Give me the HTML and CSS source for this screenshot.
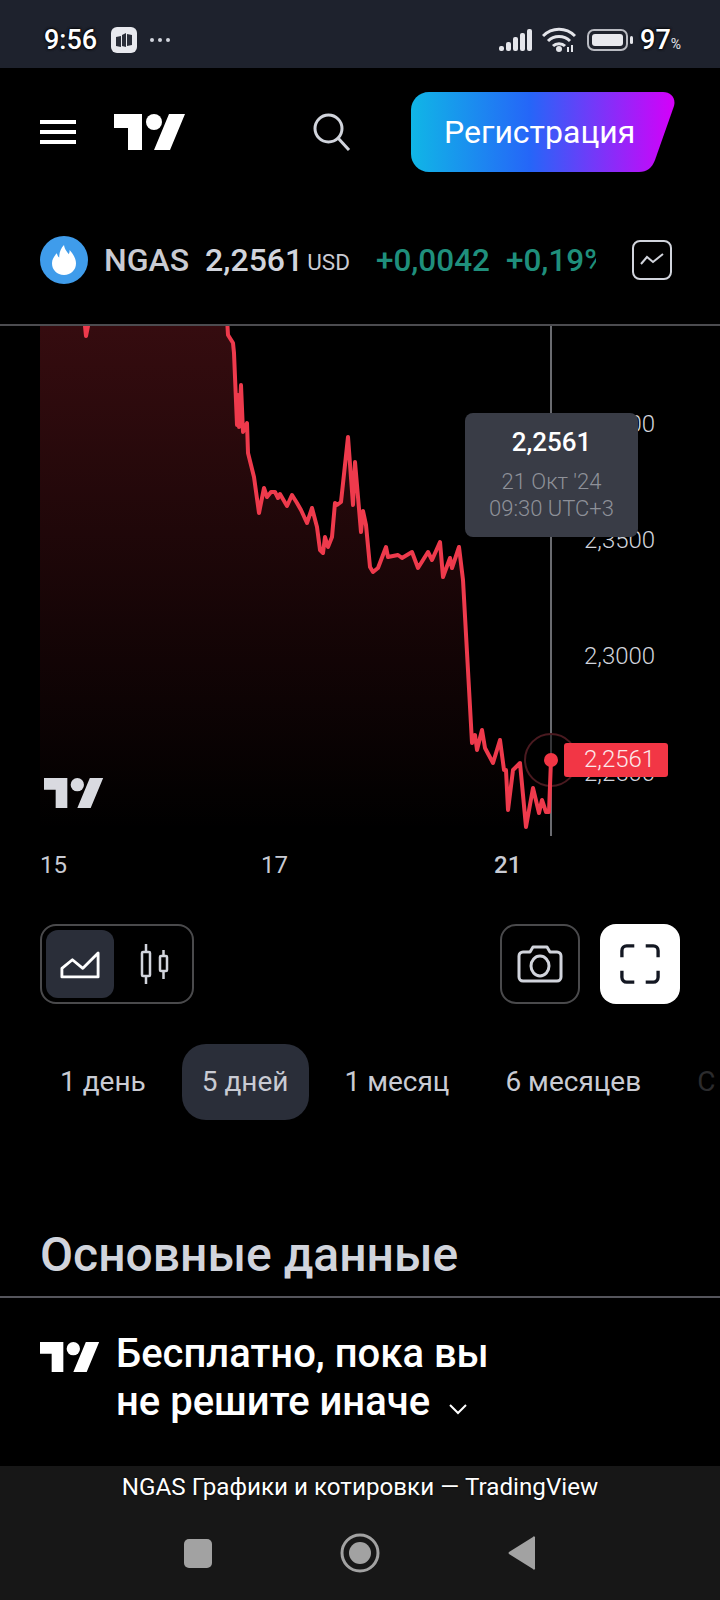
FILE: index.html
```html
<!DOCTYPE html>
<html lang="ru">
<head>
    <meta charset="UTF-8">
    <meta name="viewport" content="width=device-width, initial-scale=1.0">
    <title>NGAS Графики и котировки — TradingView</title>
    <link rel="stylesheet" href="styles.css">
</head>
<body>
    <div class="status-bar">
        <span class="clock">9:56</span>
        <span class="app-icon">
            <svg width="18" height="18" viewBox="0 0 18 18"><path d="M1 6l5-1v11l-5-1zM7 4l4-2v14l-4-1zM12 3l5 1v10l-5 1z" fill="#2a2e39"/></svg>
        </span>
        <span class="dots"><i></i><i></i><i></i></span>
        <span class="status-right">
            <svg width="34" height="24" viewBox="0 0 34 24" fill="#e4e5ea">
                <rect x="0" y="18" width="5" height="5" rx="2"/>
                <rect x="7" y="14" width="5" height="9" rx="2"/>
                <rect x="14" y="9" width="5" height="14" rx="2"/>
                <rect x="21" y="5" width="5" height="18" rx="2"/>
                <rect x="28" y="1" width="5" height="22" rx="2"/>
            </svg>
            <svg class="wifi" width="34" height="26" viewBox="0 0 34 26" fill="none" stroke="#e4e5ea" stroke-width="3">
                <path d="M1 9c9-9 23-9 32 0"/>
                <path d="M6 14c6-6 16-6 22 0"/>
                <path d="M11 19c3-3 9-3 12 0"/>
                <circle cx="17" cy="22" r="3" fill="#e4e5ea" stroke="none"/>
                <path d="M26 20v5M30 18v7" stroke-width="2"/>
            </svg>
            <svg class="battery" width="46" height="22" viewBox="0 0 46 22">
                <rect x="1" y="1" width="39" height="20" rx="6" fill="none" stroke="#b9bbc2" stroke-width="2"/>
                <rect x="5" y="5" width="31" height="12" rx="3" fill="#e8e9ee"/>
                <rect x="43" y="7" width="3" height="8" rx="1.5" fill="#e4e5ea"/>
            </svg>
            <span class="clock">97</span><span class="percent">%</span>
        </span>
    </div>

    <header class="site-header">
        <div class="nav">
            <span class="burger"><i></i><i></i><i></i></span>
            <svg class="logo" width="72" height="36" viewBox="0 4 36 18"><path d="M14 22H7V11H0V4h14v18zM28 22h-8l7.5-18h8L28 22z"/><circle cx="20" cy="8" r="4"/></svg>
            <svg class="search" width="38" height="38" viewBox="0 0 38 38" fill="none" stroke="#d1d4dc" stroke-width="3"><circle cx="15.500" cy="15.500" r="13.500"/><path d="M25 25l11 12"/></svg>
            <a class="signup">
                <svg class="signup-bg" width="264" height="80" viewBox="0 0 264 80">
                    <defs>
                        <linearGradient id="signupGrad" x1="0" y1="0.500" x2="1" y2="0.500">
                            <stop offset="0" stop-color="#10b6e6"/>
                            <stop offset="0.450" stop-color="#2566f8"/>
                            <stop offset="1" stop-color="#d500f9"/>
                        </linearGradient>
                    </defs>
                    <path d="M18 0H252C260 0 265 6 263 14L244 68C241 76 236 80 228 80H18C8 80 0 72 0 62V18C0 8 8 0 18 0Z" fill="url(#signupGrad)"/>
                </svg>
                <span class="signup-text">Регистрация</span>
            </a>
        </div>
        <div class="ticker">
            <span class="ticker-icon">
                <svg width="24" height="30" viewBox="0 0 30 36" preserveAspectRatio="none"><path d="M15 0c1 6 4 8 6 11 1-2 1-3 1-5 5 5 8 11 8 16 0 8-6 14-15 14S0 30 0 22c0-5 3-9 6-12 1 2 1 4 3 5 0-6 2-11 6-15z" fill="#fff"/></svg>
            </span>
            <span class="ticker-name">NGAS</span>
            <span class="ticker-price">2,2561</span>
            <span class="ticker-cur">USD</span>
            <span class="ticker-changes">
                <span class="ticker-change">+0,0042</span>
                <span class="ticker-change">+0,19%</span>
            </span>
            <svg class="ticker-chart" width="40" height="40" viewBox="0 0 40 40" fill="none" stroke="#d1d4dc" stroke-width="2"><rect x="1" y="1" width="38" height="38" rx="7"/><path d="M9 24l6-7 6 5 10-8"/></svg>
        </div>
    </header>

    <section class="chart">
        <svg class="plot" width="720" height="510" viewBox="0 326 720 510">
            <defs>
                <linearGradient id="areaGrad" x1="0" y1="326" x2="0" y2="830" gradientUnits="userSpaceOnUse">
                    <stop offset="0" stop-color="#f23645" stop-opacity="0.220"/>
                    <stop offset="1" stop-color="#f23645" stop-opacity="0"/>
                </linearGradient>
            </defs>
            <path id="area" fill="url(#areaGrad)" d=""/>
            <path d="M551 326V836" stroke="#6a6b70" stroke-width="2"/>
            <circle cx="551" cy="760" r="26" fill="#000" fill-opacity="0.500" stroke="#4a1a20" stroke-width="2"/>
            <path id="line" fill="none" stroke="#ee3a4c" stroke-width="4" stroke-linejoin="round" d=""/>
            <circle cx="551" cy="760" r="7" fill="#f23645"/>
        </svg>

        <svg class="chart-logo" width="60" height="30" viewBox="0 4 36 18"><path d="M14 22H7V11H0V4h14v18zM28 22h-8l7.5-18h8L28 22z"/><circle cx="20" cy="8" r="4"/></svg>

        <span class="price-label p-2400">2,4000</span>
        <span class="price-label p-2350">2,3500</span>
        <span class="price-label p-2300">2,3000</span>
        <span class="price-label p-2250">2,2500</span>
        <span class="price-tag">2,2561</span>

        <div class="tooltip">
            <div class="tooltip-price">2,2561</div>
            <div class="tooltip-date">21 Окт '24<br>09:30 UTC+3</div>
        </div>

        <span class="date-label d-15">15</span>
        <span class="date-label d-17">17</span>
        <span class="date-label d-21">21</span>
    </section>

    <div class="tools">
        <div class="type-switch">
            <span class="type-btn active">
                <svg width="40" height="29" viewBox="0 0 42 30" fill="none" stroke="#fff" stroke-width="3" stroke-linejoin="round"><path d="M2 28V19L13 10l11 9L40 3v25z"/></svg>
            </span>
            <span class="type-btn">
                <svg width="30" height="40" viewBox="0 0 30 40" fill="none" stroke="#d1d4dc" stroke-width="2.500"><rect x="2" y="8" width="8" height="24" rx="1"/><path d="M6 0v8M6 32v8"/><rect x="20" y="12" width="7" height="15" rx="1"/><path d="M23.500 6v6M23.500 27v8"/></svg>
            </span>
        </div>
        <div class="tool-right">
            <span class="tool-btn">
                <svg width="46" height="38" viewBox="0 0 46 38" fill="none" stroke="#d1d4dc" stroke-width="3" stroke-linejoin="round"><path d="M6 7h7l3-5h14l3 5h7a4 4 0 0 1 4 4v21a4 4 0 0 1-4 4H6a4 4 0 0 1-4-4V11a4 4 0 0 1 4-4z"/><ellipse cx="23" cy="21" rx="9" ry="10"/></svg>
            </span>
            <span class="tool-btn white">
                <svg width="40" height="40" viewBox="0 0 42 42" fill="none" stroke="#131722" stroke-width="3.500"><path d="M2 14V7a5 5 0 0 1 5-5h8M27 2h8a5 5 0 0 1 5 5v7M40 28v7a5 5 0 0 1-5 5h-8M15 40H7a5 5 0 0 1-5-5v-7"/></svg>
            </span>
        </div>
    </div>

    <div class="tabs">
        <span class="tab">1 день</span>
        <span class="tab active">5 дней</span>
        <span class="tab">1 месяц</span>
        <span class="tab">6 месяцев</span>
        <span class="tab faded">С</span>
    </div>

    <h2 class="section-title">Основные данные</h2>

    <div class="promo">
        <svg class="promo-logo" width="60" height="30" viewBox="0 4 36 18"><path d="M14 22H7V11H0V4h14v18zM28 22h-8l7.5-18h8L28 22z"/><circle cx="20" cy="8" r="4"/></svg>
        <p class="promo-text">Бесплатно, пока вы<br>не решите иначе
            <svg class="chevron" width="20" height="12" viewBox="0 0 20 12" fill="none" stroke="#fff" stroke-width="2"><path d="M2 2l8 8 8-8"/></svg>
        </p>
    </div>

    <footer class="browser-bar">
        <div class="page-title">NGAS Графики и котировки — TradingView</div>
        <div class="android-nav">
            <span class="nav-square"></span>
            <svg width="40" height="40" viewBox="0 0 40 40" fill="none" stroke="#a2a2a2"><circle cx="20" cy="20" r="18" stroke-width="3"/><circle cx="20" cy="20" r="11" fill="#a2a2a2" stroke="none"/></svg>
            <svg width="28" height="34" viewBox="0 0 28 34"><path d="M27 2v30a1 1 0 0 1-2 1L1 18a1.500 1.500 0 0 1 0-2L25 1a1 1 0 0 1 2 1z" fill="#a2a2a2"/></svg>
        </div>
    </footer>

    <script>
        // price line, in page coordinates (the plot's viewBox starts at y=326)
        const points = [
            [40, 300], [84, 300], [85, 326], [86, 336], [88, 326], [90, 300], [226, 300], [228, 335], [233, 343], [234, 353],
            [237, 425], [238, 395], [239, 427], [241, 385], [243, 432], [247, 423], [248, 453], [254, 477], [259, 513],
            [264, 488], [267, 497], [271, 492], [275, 492], [278, 498], [280, 494], [287, 506],
            [292, 495], [297, 503], [301, 510], [307, 523], [312, 508], [317, 527], [320, 550],
            [323, 553], [325, 537], [328, 547], [332, 537], [335, 503], [337, 505], [341, 502],
            [348, 437], [353, 505], [355, 462], [361, 532], [363, 511], [366, 525], [370, 567],
            [373, 572], [378, 568], [386, 547], [388, 557], [398, 555], [402, 558], [412, 552],
            [418, 568], [428, 552], [432, 560], [440, 542], [443, 577], [450, 558], [452, 568],
            [459, 547], [463, 580], [472, 743], [475, 735], [477, 750], [482, 730], [485, 748],
            [493, 763], [500, 740], [504, 770], [506, 770], [508, 810], [513, 770], [520, 763],
            [526, 827], [533, 788], [539, 813], [542, 800], [546, 812], [549, 812], [551, 760]
        ];
        const d = points.map((p, i) => (i ? 'L' : 'M') + p[0] + ' ' + p[1]).join('');
        document.getElementById('line').setAttribute('d', d);
        document.getElementById('area').setAttribute('d', d + 'L551 836L40 836Z');
    </script>
</body>
</html>
```
FILE: styles.css
```css
* {
    box-sizing: border-box;
}
body {
    font-family: Roboto, "Noto Sans", sans-serif;
    margin: 0;
    width: 720px;
    height: 1600px;
    overflow: hidden;
    background-color: #000;
    color: #d1d4dc;
    display: flex;
    flex-direction: column;
}

/* status bar */
.status-bar {
    height: 68px;
    flex: none;
    background-color: #1e222d;
    display: flex;
    align-items: center;
    padding: 12px 39px 0 44px;
}
.clock {
    font-size: 27px;
    font-weight: 500;
    color: #fff;
    text-shadow: 0 0 3px #000, 0 0 3px #000;
}
.app-icon {
    width: 26px;
    height: 26px;
    margin-left: 14px;
    border-radius: 6px;
    background-color: #e8e9ee;
    display: flex;
    align-items: center;
    justify-content: center;
}
.dots {
    display: flex;
    gap: 4px;
    margin-left: 13px;
}
.dots i {
    width: 4px;
    height: 4px;
    border-radius: 50%;
    background-color: #d1d4dc;
}
.status-right {
    margin-left: auto;
    display: flex;
    align-items: center;
}
.wifi {
    margin-left: 9px;
}
.battery {
    margin: 0 7px 0 11px;
}
.percent {
    font-size: 14px;
    color: #e4e5ea;
    margin-top: 8px;
}

/* header */
.site-header {
    height: 256px;
    flex: none;
    padding-top: 24px;
}
.nav {
    height: 80px;
    display: flex;
    align-items: center;
    padding-left: 40px;
}
.burger {
    width: 36px;
    display: flex;
    flex-direction: column;
    gap: 6px;
}
.burger i {
    height: 4px;
    background-color: #fff;
}
.logo {
    margin-left: 38px;
    fill: #fff;
}
.search {
    margin-left: 127px;
}
.signup {
    position: relative;
    width: 264px;
    height: 80px;
    margin-left: 60px;
    display: flex;
    align-items: center;
    padding-left: 33px;
}
.signup-bg {
    position: absolute;
    left: 0;
    top: 0;
}
.signup-text {
    position: relative;
    font-size: 32px;
    font-weight: 400;
    color: #fff;
}
.ticker {
    height: 48px;
    margin-top: 64px;
    display: flex;
    align-items: center;
    padding: 0 48px 0 40px;
}
.ticker-icon {
    width: 48px;
    height: 48px;
    flex: none;
    border-radius: 50%;
    background-color: #3f9ceb;
    display: flex;
    align-items: center;
    justify-content: center;
}
.ticker-name {
    margin-left: 16px;
    font-size: 32px;
    font-weight: 500;
    color: #c9cbd3;
}
.ticker-price {
    margin-left: 16px;
    font-size: 32px;
    font-weight: 500;
    color: #d1d4dc;
}
.ticker-cur {
    margin: 4px 0 0 4px;
    font-size: 22.500px;
    color: #c9cbd3;
}
.ticker-changes {
    width: 220px;
    margin-left: 26px;
    display: flex;
    gap: 16px;
    overflow: hidden;
    white-space: nowrap;
}
.ticker-change {
    font-size: 31.500px;
    font-weight: 500;
    color: #1f8f7c;
}
.ticker-chart {
    margin-left: auto;
    flex: none;
}

/* chart */
.chart {
    position: relative;
    height: 566px;
    flex: none;
    border-top: 2px solid #4c4c50;
}
.plot {
    display: block;
}
.chart-logo {
    position: absolute;
    left: 44px;
    top: 452px;
    fill: #d9dae0;
}
.price-label {
    position: absolute;
    left: 584px;
    font-size: 24px;
    font-weight: 300;
    line-height: 28px;
    color: #d1d4dc;
}
.p-2400 { top: 84px; }
.p-2350 { top: 200px; }
.p-2300 { top: 316px; }
.p-2250 { top: 433px; }
.price-tag {
    position: absolute;
    left: 564px;
    top: 417px;
    width: 104px;
    height: 34px;
    padding-left: 20px;
    border-radius: 3px;
    background-color: #f23645;
    color: #fde8ea;
    font-size: 24px;
    font-weight: 300;
    line-height: 32px;
}
.tooltip {
    position: absolute;
    left: 465px;
    top: 87px;
    width: 173px;
    height: 124px;
    border-radius: 8px;
    background-color: #393c46;
    text-align: center;
    padding-top: 13px;
}
.tooltip-price {
    font-size: 26px;
    font-weight: 500;
    line-height: 32px;
    color: #fff;
}
.tooltip-date {
    margin-top: 10px;
    font-size: 22px;
    font-weight: 300;
    line-height: 27px;
    color: #8e9199;
}
.date-label {
    position: absolute;
    top: 525px;
    font-size: 24px;
    line-height: 28px;
    color: #c9cbd3;
}
.d-15 { left: 40px; }
.d-17 { left: 261px; }
.d-21 { left: 494px; font-weight: 500; }

/* tools row */
.tools {
    flex: none;
    height: 80px;
    margin-top: 34px;
    padding: 0 40px;
    display: flex;
    justify-content: space-between;
}
.type-switch {
    width: 154px;
    border: 2px solid #4a4a4c;
    border-radius: 16px;
    padding: 4px;
    display: flex;
}
.type-btn {
    width: 68px;
    border-radius: 12px;
    display: flex;
    align-items: center;
    justify-content: center;
}
.type-btn.active {
    background-color: #2a2e39;
}
.type-btn + .type-btn {
    margin-left: 12px;
    width: 58px;
}
.tool-right {
    display: flex;
    gap: 20px;
}
.tool-btn {
    width: 80px;
    border: 2px solid #4a4a4c;
    border-radius: 16px;
    display: flex;
    align-items: center;
    justify-content: center;
}
.tool-btn.white {
    border: none;
    background-color: #fff;
}

/* range tabs */
.tabs {
    flex: none;
    height: 76px;
    margin-top: 40px;
    padding-left: 40px;
    display: flex;
    gap: 16px;
    white-space: nowrap;
}
.tab {
    flex: none;
    padding: 0 20px;
    border-radius: 24px;
    font-size: 28px;
    line-height: 76px;
    color: #c9cbd3;
}
.tab.active {
    background-color: #2a2e39;
}
.tab.faded {
    color: #2b2b2d;
}

/* fundamentals */
.section-title {
    flex: none;
    height: 178px;
    margin: 0;
    padding: 107px 0 0 40px;
    border-bottom: 2px solid #55555c;
    font-size: 48px;
    font-weight: 500;
    line-height: 56px;
    color: #d1d4dc;
}
.promo {
    flex: none;
    height: 168px;
    padding: 41px 0 0 40px;
    display: flex;
}
.promo-logo {
    fill: #fff;
    margin-top: 3px;
}
.promo-text {
    margin: -9px 0 0 16px;
    font-size: 40px;
    font-weight: 500;
    line-height: 48px;
    color: #fff;
}
.chevron {
    margin-left: 8px;
}

/* browser and android bars */
.browser-bar {
    flex: 1;
    background-color: #171717;
}
.page-title {
    padding-top: 7px;
    text-align: center;
    font-size: 24.200px;
    line-height: 28px;
    color: #fff;
    text-shadow: 0 0 2px #000;
}
.android-nav {
    margin-top: 32px;
    display: flex;
    align-items: center;
    justify-content: center;
    gap: 128px;
}
.nav-square {
    width: 28px;
    height: 29px;
    border-radius: 5px;
    background-color: #a2a2a2;
}
```
